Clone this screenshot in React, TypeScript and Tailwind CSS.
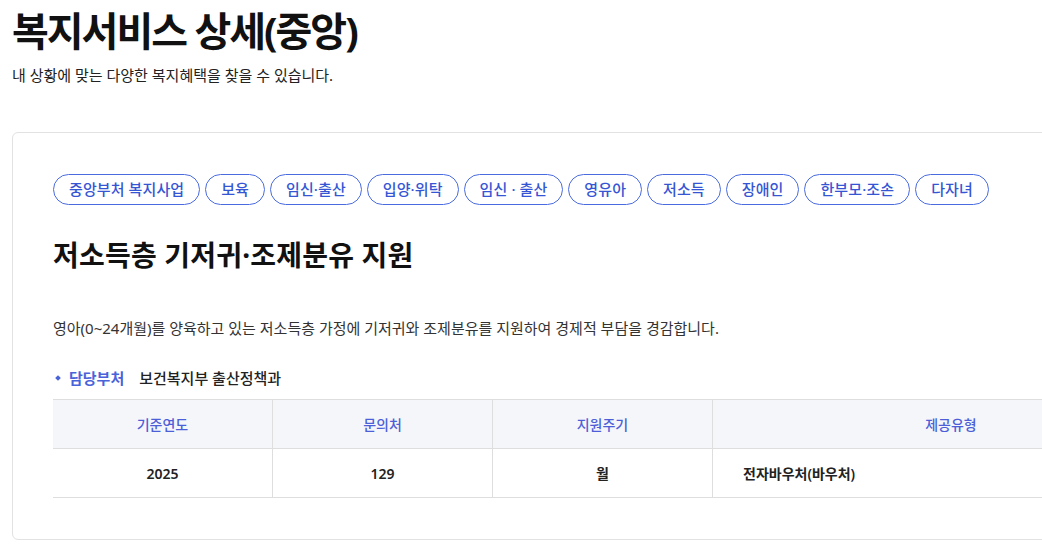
import React from 'react';

const tags = [
	'중앙부처 복지사업',
	'보육',
	'임신·출산',
	'입양·위탁',
	'임신 · 출산',
	'영유아',
	'저소득',
	'장애인',
	'한부모·조손',
	'다자녀'
];

const columns = [
	{ label: '기준연도', value: '2025', align: 'center' },
	{ label: '문의처', value: '129', align: 'center' },
	{ label: '지원주기', value: '월', align: 'center' },
	{ label: '제공유형', value: '전자바우처(바우처)', align: 'left' }
];

const App = () => {
	return (
		<div
			className="w-full h-[551px] overflow-hidden bg-white px-3 pt-[7px]"
			style={{ fontFamily: '"Noto Sans", "Noto Sans CJK KR", sans-serif' }}
		>
			{/* Header */}
			<h1 className="text-[40px] leading-[48px] font-bold text-[#111] tracking-[-2px]">
				복지서비스 상세(중앙)
			</h1>
			<p className="mt-[10px] text-[15px] leading-[20px] text-[#222]">
				내 상황에 맞는 다양한 복지혜택을 찾을 수 있습니다.
			</p>

			{/* Detail card */}
			<div className="mt-[47px] w-[1218px] rounded-[6px] border border-[#e2e2e2] px-[40px] pt-[41px] pb-[41px]">
				{/* Tags */}
				<div className="flex flex-wrap gap-[5px]">
					{tags.map((tag) => (
						<span
							key={tag}
							className="h-[31px] flex items-center rounded-full border border-[#4a6be0] px-[15px] text-[15px] font-medium text-[#3556d4] tracking-[0.1px]"
						>
							{tag}
						</span>
					))}
				</div>

				<h2 className="mt-[32px] text-[28px] leading-[36px] font-bold text-[#111] tracking-[0.2px]">
					저소득층 기저귀·조제분유 지원
				</h2>

				<p className="mt-[45px] text-[15px] leading-[20px] text-[#333]">
					영아(0~24개월)를 양육하고 있는 저소득층 가정에 기저귀와 조제분유를 지원하여 경제적 부담을 경감합니다.
				</p>

				{/* 담당부처 */}
				<div className="mt-[30px] flex items-center text-[15px] leading-[20px]">
					<span className="ml-[3px] mr-[9px] w-[4px] h-[4px] rotate-45 bg-[#4a63d9]" />
					<span className="font-semibold text-[#4a63d9]">담당부처</span>
					<span className="ml-[15px] font-medium text-[#222]">보건복지부 출산정책과</span>
				</div>

				{/* Table */}
				<div className="mt-[11px] grid grid-cols-[219px_220px_220px_1fr] border-t border-b border-[#dedede]">
					{columns.map((col, i) => (
						<div
							key={col.label}
							className={`h-[49px] flex items-center justify-center bg-[#f5f6fa] border-b border-[#dedede] text-[14px] font-medium text-[#4d5fd8] ${
								i > 0 ? 'border-l' : ''
							}`}
						>
							{col.label}
						</div>
					))}
					{columns.map((col, i) => (
						<div
							key={col.value}
							className={`h-[48px] flex items-center text-[14px] font-semibold text-[#222] ${
								col.align === 'center' ? 'justify-center' : 'justify-start pl-[30px]'
							} ${i > 0 ? 'border-l border-[#dedede]' : ''}`}
						>
							{col.value}
						</div>
					))}
				</div>
			</div>
		</div>
	);
};

export default App;
